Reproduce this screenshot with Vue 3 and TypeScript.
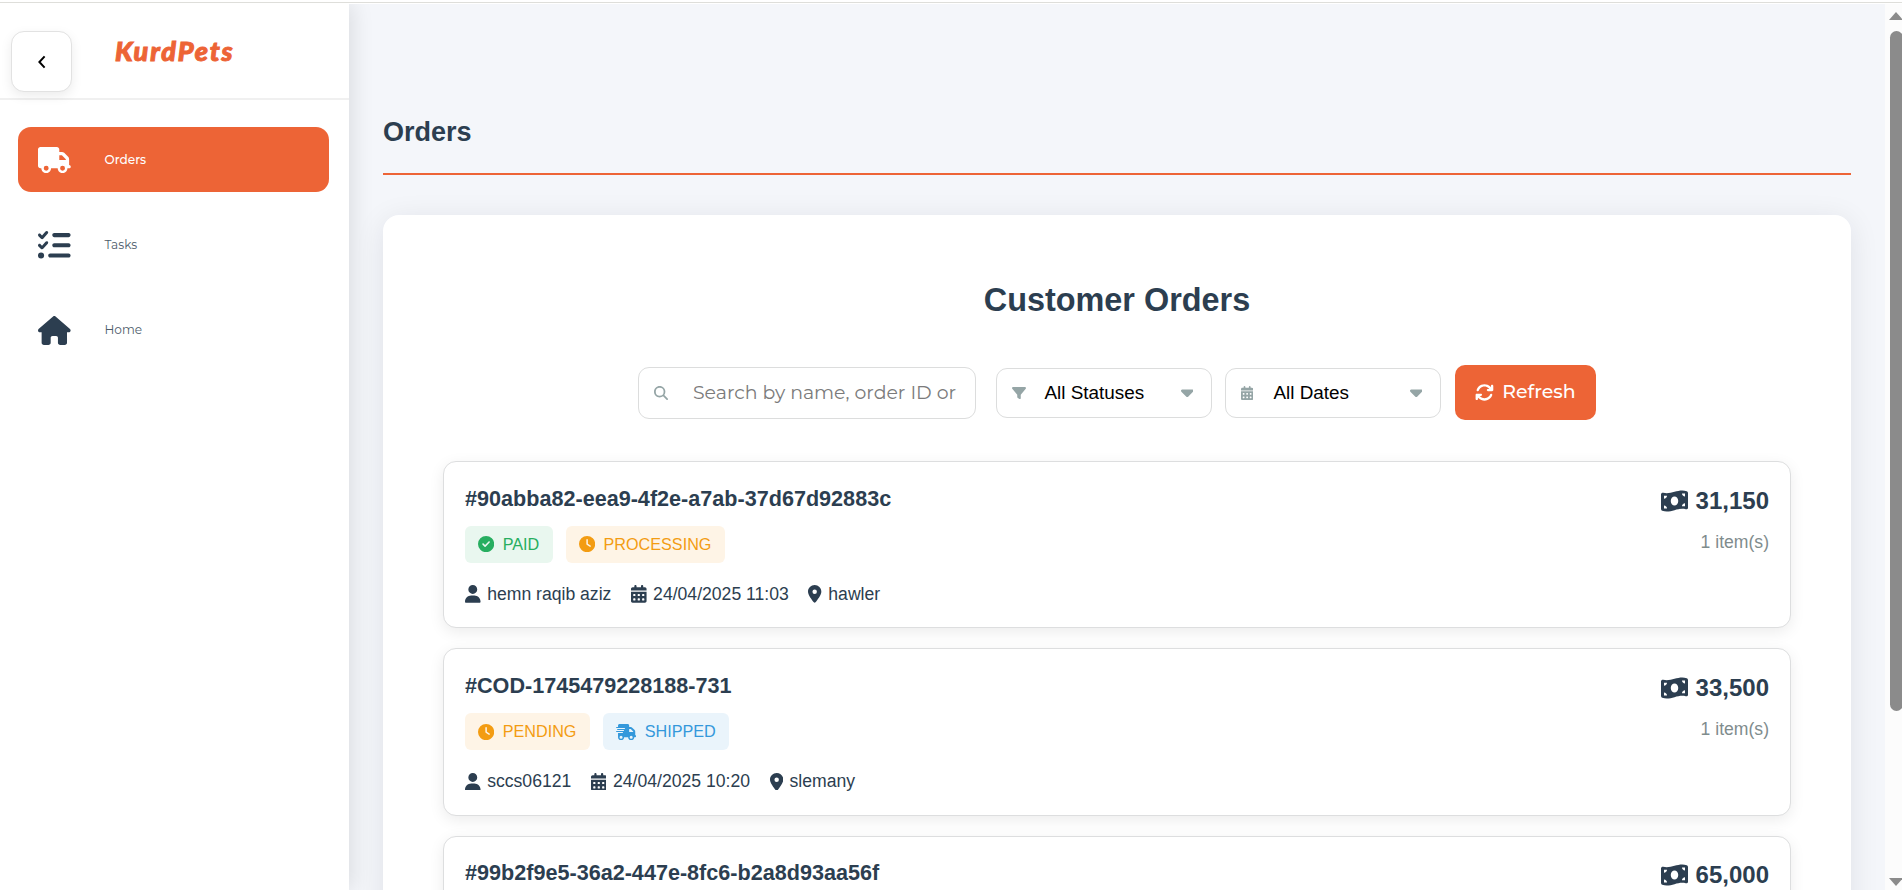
<script setup lang="ts">
import { h, type FunctionalComponent } from 'vue'

type IconName =
  | 'truck' | 'tasks' | 'home' | 'search' | 'filter' | 'calendar' | 'caret' | 'refresh'
  | 'check' | 'clock' | 'fast' | 'user' | 'pin' | 'money'

const icons: Record<IconName, [number, string]> = {
  truck: [640, 'M48 0C21.5 0 0 21.5 0 48V368c0 26.5 21.5 48 48 48H64c0 53 43 96 96 96s96-43 96-96H384c0 53 43 96 96 96s96-43 96-96h32c17.7 0 32-14.3 32-32s-14.3-32-32-32V288 256 237.3c0-17-6.7-33.3-18.7-45.3L512 114.7c-12-12-28.3-18.7-45.3-18.7H416V48c0-26.5-21.5-48-48-48H48zM416 160h50.7L544 237.3V256H416V160zM112 416a48 48 0 1 1 96 0 48 48 0 1 1 -96 0zm368-48a48 48 0 1 1 0 96 48 48 0 1 1 0-96z'],
  tasks: [512, 'M152.1 38.2c9.9 8.9 10.7 24 1.8 33.9l-72 80c-4.4 4.9-10.6 7.8-17.2 7.9s-12.9-2.4-17.6-7L7 113C-2.3 103.6-2.3 88.4 7 79s24.6-9.4 33.9 0l22.1 22.1 55.1-61.2c8.9-9.9 24-10.7 33.9-1.8zm0 160c9.9 8.9 10.7 24 1.8 33.9l-72 80c-4.4 4.9-10.6 7.8-17.2 7.9s-12.9-2.4-17.6-7L7 273c-9.4-9.4-9.4-24.6 0-33.9s24.6-9.4 33.9 0l22.1 22.1 55.1-61.2c8.9-9.9 24-10.7 33.9-1.8zM224 96c0-17.7 14.3-32 32-32H480c17.7 0 32 14.3 32 32s-14.3 32-32 32H256c-17.7 0-32-14.3-32-32zm0 160c0-17.7 14.3-32 32-32H480c17.7 0 32 14.3 32 32s-14.3 32-32 32H256c-17.7 0-32-14.3-32-32zM160 416c0-17.7 14.3-32 32-32H480c17.7 0 32 14.3 32 32s-14.3 32-32 32H192c-17.7 0-32-14.3-32-32zM48 368a48 48 0 1 1 0 96 48 48 0 1 1 0-96z'],
  home: [576, 'M575.8 255.5c0 18-15 32.1-32 32.1h-32l.7 160.2c0 2.7-.2 5.4-.5 8.1V472c0 22.1-17.9 40-40 40H456c-1.1 0-2.2 0-3.3-.1c-1.4 .1-2.8 .1-4.2 .1H416 392c-22.1 0-40-17.9-40-40V448 384c0-17.7-14.3-32-32-32H256c-17.7 0-32 14.3-32 32v64 24c0 22.1-17.9 40-40 40H160 128.1c-1.5 0-3-.1-4.5-.2c-1.2 .1-2.4 .2-3.6 .2H104c-22.1 0-40-17.9-40-40V360c0-.9 0-1.9 .1-2.8V287.6H32c-18 0-32-14-32-32.1c0-9 3-17 10-24L266.4 8c7-7 15-8 22-8s15 2 21 7L564.8 231.5c8 7 12 15 11 24z'],
  search: [512, 'M416 208c0 45.9-14.9 88.3-40 122.7L502.6 457.4c12.5 12.5 12.5 32.8 0 45.3s-32.8 12.5-45.3 0L330.7 376c-34.4 25.2-76.8 40-122.7 40C93.1 416 0 322.9 0 208S93.1 0 208 0S416 93.1 416 208zM208 352a144 144 0 1 0 0-288 144 144 0 1 0 0 288z'],
  filter: [512, 'M3.9 54.9C10.5 40.9 24.5 32 40 32H472c15.5 0 29.5 8.9 36.1 22.9s4.6 30.5-5.2 42.5L320 320.9V448c0 12.1-6.8 23.2-17.7 28.6s-23.8 4.3-33.5-3l-64-48c-8.1-6-12.8-15.5-12.8-25.6V320.9L9 97.3C-.7 85.4-2.8 68.8 3.9 54.9z'],
  calendar: [448, 'M128 0c17.7 0 32 14.3 32 32V64H288V32c0-17.7 14.3-32 32-32s32 14.3 32 32V64h48c26.5 0 48 21.5 48 48v48H0V112C0 85.5 21.5 64 48 64H96V32c0-17.7 14.3-32 32-32zM0 192H448V464c0 26.5-21.5 48-48 48H48c-26.5 0-48-21.5-48-48V192zm64 80v32c0 8.8 7.2 16 16 16h32c8.8 0 16-7.2 16-16V272c0-8.8-7.2-16-16-16H80c-8.8 0-16 7.2-16 16zm128 0v32c0 8.8 7.2 16 16 16h32c8.8 0 16-7.2 16-16V272c0-8.8-7.2-16-16-16H208c-8.8 0-16 7.2-16 16zm144-16c-8.8 0-16 7.2-16 16v32c0 8.8 7.2 16 16 16h32c8.8 0 16-7.2 16-16V272c0-8.8-7.2-16-16-16H336zM64 400v32c0 8.8 7.2 16 16 16h32c8.8 0 16-7.2 16-16V400c0-8.8-7.2-16-16-16H80c-8.8 0-16 7.2-16 16zm144-16c-8.8 0-16 7.2-16 16v32c0 8.8 7.2 16 16 16h32c8.8 0 16-7.2 16-16V400c0-8.8-7.2-16-16-16H208zm112 16v32c0 8.8 7.2 16 16 16h32c8.8 0 16-7.2 16-16V400c0-8.8-7.2-16-16-16H336c-8.8 0-16 7.2-16 16z'],
  caret: [320, 'M137.4 374.6c12.5 12.5 32.8 12.5 45.3 0l128-128c9.2-9.2 11.9-22.9 6.9-34.9s-16.6-19.8-29.6-19.8L32 192c-12.9 0-24.6 7.8-29.6 19.8s-2.2 25.7 6.9 34.9l128 128z'],
  refresh: [512, 'M105.1 202.6c7.7-21.8 20.2-42.3 37.8-59.8c62.5-62.5 163.8-62.5 226.3 0L386.3 160H352c-17.7 0-32 14.3-32 32s14.3 32 32 32H463.9c17.7 0 32-14.3 32-32V80c0-17.7-14.3-32-32-32s-32 14.3-32 32v35.2L414.4 97.6c-87.5-87.5-229.3-87.5-316.8 0C73.2 122 55.6 150.7 44.8 181.4c-5.9 16.7 2.9 34.9 19.5 40.8s34.9-2.9 40.8-19.5zM39 289.3c-5 1.5-9.8 4.2-13.7 8.2c-4 4-6.7 8.8-8.1 14c-.3 1.2-.6 2.5-.8 3.8c-.3 1.7-.4 3.4-.4 5.1V432c0 17.7 14.3 32 32 32s32-14.3 32-32V396.9l17.6 17.5c87.5 87.4 229.3 87.4 316.7 0c24.4-24.4 42.1-53.1 52.9-83.7c5.9-16.7-2.9-34.9-19.5-40.8s-34.9 2.9-40.8 19.5c-7.7 21.8-20.2 42.3-37.8 59.8c-62.5 62.5-163.8 62.5-226.3 0l-.1-.1L125.6 352H160c17.7 0 32-14.3 32-32s-14.3-32-32-32H48.4c-1.6 0-3.2 .1-4.8 .3s-3.1 .5-4.6 1z'],
  check: [512, 'M256 512A256 256 0 1 0 256 0a256 256 0 1 0 0 512zM369 209L241 337c-9.4 9.4-24.6 9.4-33.9 0l-64-64c-9.4-9.4-9.4-24.6 0-33.9s24.6-9.4 33.9 0l47 47L335 175c9.4-9.4 24.6-9.4 33.9 0s9.4 24.6 0 33.9z'],
  clock: [512, 'M256 0a256 256 0 1 1 0 512A256 256 0 1 1 256 0zM232 120V256c0 8 4 15.5 10.7 20l96 64c11 7.4 25.9 4.4 33.3-6.7s4.4-25.9-6.7-33.3L280 243.2V120c0-13.3-10.7-24-24-24s-24 10.7-24 24z'],
  fast: [640, 'M112 0C85.5 0 64 21.5 64 48V96H16c-8.8 0-16 7.2-16 16s7.2 16 16 16H64 272c8.8 0 16 7.2 16 16s-7.2 16-16 16H64 48c-8.8 0-16 7.2-16 16s7.2 16 16 16H64 240c8.8 0 16 7.2 16 16s-7.2 16-16 16H64 16c-8.8 0-16 7.2-16 16s7.2 16 16 16H64 208c8.8 0 16 7.2 16 16s-7.2 16-16 16H64V416c0 53 43 96 96 96s96-43 96-96H384c0 53 43 96 96 96s96-43 96-96h32c17.7 0 32-14.3 32-32s-14.3-32-32-32V288 256 237.3c0-17-6.7-33.3-18.7-45.3L512 114.7c-12-12-28.3-18.7-45.3-18.7H416V48c0-26.5-21.5-48-48-48H112zM544 237.3V256H416V160h50.7L544 237.3zM160 368a48 48 0 1 1 0 96 48 48 0 1 1 0-96zm272 48a48 48 0 1 1 96 0 48 48 0 1 1 -96 0z'],
  user: [448, 'M224 256A128 128 0 1 0 224 0a128 128 0 1 0 0 256zm-45.7 48C79.8 304 0 383.8 0 482.3C0 498.7 13.3 512 29.7 512H418.3c16.4 0 29.7-13.3 29.7-29.7C448 383.8 368.2 304 269.7 304H178.3z'],
  pin: [384, 'M215.7 499.2C267 435 384 279.4 384 192C384 86 298 0 192 0S0 86 0 192c0 87.4 117 243 168.3 307.2c12.3 15.3 35.1 15.3 47.4 0zM192 128a64 64 0 1 1 0 128 64 64 0 1 1 0-128z'],
  money: [576, 'M0 112.5V422.3c0 18 10.1 35 27 41.3c87 32.5 174 10.3 261-11.9c79.8-20.3 159.6-40.7 239.3-18.9c23 6.3 48.7-9.5 48.7-33.4V89.7c0-18-10.1-35-27-41.3C462 15.9 375 38.1 288 60.3C208.2 80.6 128.4 100.9 48.7 79.1C25.6 72.8 0 88.6 0 112.5zM288 352c-44.2 0-80-43-80-96s35.8-96 80-96s80 43 80 96s-35.8 96-80 96zM64 352c35.3 0 64 28.7 64 64H64V352zm64-208c0 35.3-28.7 64-64 64V144h64zM512 304v64H448c0-35.3 28.7-64 64-64zM448 96h64v64c-35.3 0-64-28.7-64-64z'],
}

const Icon: FunctionalComponent<{ name: IconName; size: number }> = ({ name, size }) => {
  const [w, d] = icons[name]
  return h(
    'svg',
    { viewBox: `0 0 ${w} 512`, width: (size * w) / 512, height: size, fill: 'currentColor', 'aria-hidden': 'true' },
    [h('path', { d })],
  )
}
Icon.props = ['name', 'size']

interface Badge { label: string; tone: 'green' | 'amber' | 'blue'; icon: IconName }
interface Order {
  id: string
  badges: Badge[]
  customer: string
  date: string
  city: string
  total: string
}

const nav: { label: string; icon: IconName; size: number; active?: boolean }[] = [
  { label: 'Orders', icon: 'truck', size: 26.2, active: true },
  { label: 'Tasks', icon: 'tasks', size: 32.6 },
  { label: 'Home', icon: 'home', size: 29 },
]

const orders: Order[] = [
  {
    id: '#90abba82-eea9-4f2e-a7ab-37d67d92883c',
    badges: [
      { label: 'PAID', tone: 'green', icon: 'check' },
      { label: 'PROCESSING', tone: 'amber', icon: 'clock' },
    ],
    customer: 'hemn raqib aziz', date: '24/04/2025 11:03', city: 'hawler', total: '31,150',
  },
  {
    id: '#COD-1745479228188-731',
    badges: [
      { label: 'PENDING', tone: 'amber', icon: 'clock' },
      { label: 'SHIPPED', tone: 'blue', icon: 'fast' },
    ],
    customer: 'sccs06121', date: '24/04/2025 10:20', city: 'slemany', total: '33,500',
  },
  { id: '#99b2f9e5-36a2-447e-8fc6-b2a8d93aa56f', badges: [], customer: '', date: '', city: '', total: '65,000' },
]
</script>

<template>
  <div class="page">
    <div class="strip"></div>
    <div class="shell">
      <aside class="sidebar">
        <header class="brand">
          <button class="toggle" aria-label="Collapse">
            <svg width="20" height="20" viewBox="0 0 20 20" fill="none" stroke="#000" stroke-width="2">
              <path d="M12.6 4.4 7.4 10l5.2 5.6" />
            </svg>
          </button>
          <span class="logo">KurdPets</span>
        </header>
        <nav class="nav">
          <a v-for="n in nav" :key="n.label" class="nav-item" :class="{ active: n.active }">
            <span class="nav-icon"><Icon :name="n.icon" :size="n.size" /></span>
            <span>{{ n.label }}</span>
          </a>
        </nav>
      </aside>

      <main class="main">
        <h1 class="title">Orders</h1>
        <section class="panel">
          <h2 class="heading">Customer Orders</h2>
          <div class="filters">
            <div class="field search"><Icon name="search" :size="14" /><span class="placeholder">Search by name, order ID or</span></div>
            <div class="field select"><span class="lead"><Icon name="filter" :size="14" /></span><span>All Statuses</span><span class="caret"><Icon name="caret" :size="20" /></span></div>
            <div class="field select"><span class="lead"><Icon name="calendar" :size="14" /></span><span>All Dates</span><span class="caret"><Icon name="caret" :size="20" /></span></div>
            <button class="refresh"><Icon name="refresh" :size="18.9" /><span>Refresh</span></button>
          </div>

          <article v-for="o in orders" :key="o.id" class="order">
            <div class="info">
              <h3 class="order-id">{{ o.id }}</h3>
              <div class="badges">
                <span v-for="b in o.badges" :key="b.label" class="badge" :class="b.tone">
                  <Icon :name="b.icon" :size="16.2" />{{ b.label }}
                </span>
              </div>
              <div v-if="o.customer" class="meta">
                <span><Icon name="user" :size="17.8" />{{ o.customer }}</span>
                <span><Icon name="calendar" :size="17.8" />{{ o.date }}</span>
                <span><Icon name="pin" :size="17.8" />{{ o.city }}</span>
              </div>
            </div>
            <div class="amount">
              <div class="total"><Icon name="money" :size="24" />{{ o.total }}</div>
              <div v-if="o.customer" class="items">1 item(s)</div>
            </div>
          </article>
        </section>
      </main>

      <div class="scrollbar">
        <svg width="14" height="8" viewBox="0 0 14 8"><path d="M7 0l7 8H0z" fill="#8b8b8b" /></svg>
        <div class="thumb"></div>
        <svg class="down" width="14" height="8" viewBox="0 0 14 8"><path d="M7 8l7-8H0z" fill="#8b8b8b" /></svg>
      </div>
    </div>
  </div>
</template>

<style>
body { margin: 0; overflow: hidden; }
</style>

<style scoped>
* { box-sizing: border-box; }
svg { display: block; flex: none; }
h1, h2, h3 { margin: 0; font-weight: 700; }
button { border: 0; padding: 0; }
.page {
  height: 890px;
  overflow: hidden;
  display: flex;
  flex-direction: column;
  color: #2c3e50;
  font-family: "Liberation Sans", Arial, sans-serif;
}
.strip {
  flex: none;
  height: 4px;
  background: linear-gradient(#fff 2px, #dededa 2px, #dededa 3px, #fff 3px);
}
.shell { flex: 1; min-height: 0; display: flex; background: #f4f6fa; }

.sidebar {
  flex: none;
  width: 349px;
  background: #fff;
  box-shadow: 4px 0 20px rgba(0, 0, 0, 0.1);
  clip-path: inset(0 -40px 0 0);
}
.brand {
  height: 96px;
  display: flex;
  align-items: flex-start;
  padding: 27px 0 0 11px;
  border-bottom: 2px solid #f0f0f0;
}
.toggle {
  width: 61px;
  height: 61px;
  display: grid;
  place-items: center;
  background: #fff;
  border: 1px solid #e2e2e2;
  border-radius: 13px;
  box-shadow: 0 4px 12px rgba(0, 0, 0, 0.08);
}
.logo {
  margin-left: 43px;
  margin-top: 2px;
  font: italic 900 27px/36px Lato, sans-serif;
  letter-spacing: 1.8px;
  color: #ed6436;
  -webkit-text-stroke: 1px #ed6436;
}
.nav { display: flex; flex-direction: column; gap: 20px; padding: 27px 20px 0 18px; }
.nav-item {
  height: 65px;
  display: flex;
  align-items: center;
  padding-left: 20px;
  border-radius: 13px;
  font: 400 12.1px/18px Montserrat, Inter, sans-serif;
  color: #4c5b6a;
}
.nav-icon { width: 66.5px; padding-top: 1px; color: #2c3e50; }
.active { background: #ed6436; color: #fff; font-weight: 500; }
.active .nav-icon { color: #fff; }

.main { flex: 1; min-width: 0; padding: 0 34px; }
.title {
  height: 171px;
  padding-top: 112px;
  font-size: 27px;
  line-height: 32px;
  border-bottom: 2px solid #ed6436;
}
.panel {
  margin-top: 40px;
  height: 900px;
  padding: 66px 60px 0;
  background: #fff;
  border-radius: 16px;
  box-shadow: 0 5px 30px rgba(20, 10, 40, 0.09);
}
.heading { text-align: center; font-size: 32.4px; line-height: 38px; }
.filters {
  display: flex;
  align-items: center;
  justify-content: center;
  height: 55px;
  margin-top: 46px;
  margin-bottom: 41px;
}
.field {
  display: flex;
  align-items: center;
  border: 1px solid #dcdddd;
  border-radius: 11px;
  background: #fff;
}
.field > svg, .lead, .caret { color: #95a5a6; }
.search { width: 338px; height: 52px; padding-left: 15px; margin-right: 20px; }
.placeholder {
  margin-left: 25px;
  font: 400 18.9px/28px Montserrat, Inter, sans-serif;
  color: #7b7b7b;
  white-space: nowrap;
}
.select { width: 216px; height: 50px; padding: 0 18px 0 15px; margin-right: 13px; font-size: 18.9px; color: #000; }
.select + .refresh { margin-left: 1px; }
.lead { width: 32.4px; }
.caret { margin-left: auto; padding-bottom: 1px; }
.refresh {
  width: 141px;
  height: 55px;
  display: flex;
  align-items: center;
  justify-content: center;
  gap: 8px;
  color: #fff;
  background: #ed6436;
  border-radius: 10px;
  font: 500 18.9px/28px Montserrat, Inter, sans-serif;
}
.refresh span { padding-bottom: 2px; }

.order {
  height: 167.2px;
  margin-bottom: 20.2px;
  padding: 21.5px 21px 0;
  display: flex;
  justify-content: space-between;
  border: 1px solid #dddedf;
  border-radius: 13px;
  box-shadow: 0 4px 15px rgba(0, 0, 0, 0.08);
  background: #fff;
}
.order-id { font-size: 21.6px; line-height: 30px; }
.badges { display: flex; gap: 13px; height: 38px; margin-top: 12px; }
.badge {
  display: flex;
  align-items: center;
  gap: 8.5px;
  padding: 0 13.5px 0 13px;
  height: 37.5px;
  border-radius: 6px;
  font-size: 16.2px;
}
.green { color: #27ae60; background: #e9f7ef; }
.amber { color: #f39c12; background: #fef4e6; }
.blue { color: #3498db; background: #eaf4fb; }
.meta { display: flex; gap: 19.6px; margin-top: 20.2px; font-size: 17.6px; line-height: 21px; }
.meta span { display: flex; align-items: center; gap: 6.6px; }
.amount { text-align: right; }
.total {
  display: flex;
  align-items: center;
  justify-content: flex-end;
  gap: 7.5px;
  margin-top: 2px;
  font-size: 24px;
  font-weight: 700;
  line-height: 30px;
}
.items { margin-top: 16.5px; font-size: 17.6px; line-height: 20px; color: #7f8c8d; }

.scrollbar {
  flex: none;
  width: 17px;
  padding-left: 4px;
  background: #fcfcfc;
  display: flex;
  flex-direction: column;
  padding-top: 8px;
  padding-bottom: 4px;
  overflow: hidden;
}
.thumb { margin: 11px 0 0 1px; width: 13px; height: 680px; border-radius: 7px; background: #8b8b8b; }
.down { margin-top: auto; }
</style>
